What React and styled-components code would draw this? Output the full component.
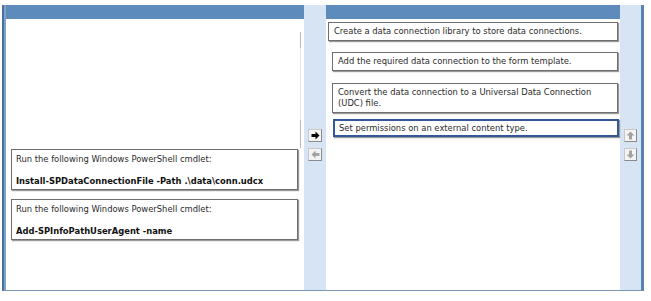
import React from 'react';
import styled, { createGlobalStyle } from 'styled-components';

const GlobalStyle = createGlobalStyle`
  html, body {
    margin: 0;
    padding: 0;
    background: #ffffff;
  }
  body {
    font-family: 'DejaVu Sans', Verdana, sans-serif;
    font-size: 8.4px;
    color: #222;
  }
`;

const Frame = styled.div`
  display: flex;
  margin: 5px 0 0 2px;
  width: 642px;
  height: 286px;
  border-left: 2px solid #46709f;
  border-right: 3px solid #5a82b0;
  border-bottom: 1px solid #7f97b4;
  box-sizing: border-box;
`;

const Panel = styled.div`
  display: flex;
  flex-direction: column;
  width: ${p => p.$width}px;
  border-left: ${p => (p.$edge ? '2px solid #7ea2ca' : 'none')};
  background: #ffffff;
`;

const Header = styled.div`
  height: 14px;
  flex: none;
  background: #5d8cbc;
`;

const Body = styled.div`
  position: relative;
  flex: 1;
  display: flex;
  flex-direction: column;
  padding-top: ${p => p.$top}px;
`;

const ScrollLine = styled.div`
  position: absolute;
  right: 3px;
  top: 13px;
  width: 1px;
  height: 116px;
  background: linear-gradient(#b8b8b8 0 14%, #e6e6e6 14% 76%, #b8b8b8 76%);
`;

const Strip = styled.div`
  display: flex;
  flex-direction: column;
  align-items: center;
  gap: 6px;
  width: ${p => p.$width}px;
  padding-top: 124px;
  background: #d6e4f4;
  box-sizing: border-box;
`;

const ArrowButton = styled.button`
  display: flex;
  align-items: center;
  justify-content: center;
  width: ${p => p.$w}px;
  height: 13px;
  padding: 0;
  background: #f4f4f4;
  border: 1px solid #c8c8c8;
  border-right-color: #8a8a8a;
  border-bottom-color: #8a8a8a;
  box-sizing: border-box;
`;

const Card = styled.div`
  width: ${p => p.$width}px;
  margin: ${p => p.$mt}px 0 0 ${p => p.$ml}px;
  padding: ${p => (p.$selected ? '2px 4px 1px 4px' : '3px 5px 3px 5px')};
  border: ${p => (p.$selected ? '2px solid #34579a' : '1px solid #6e6e6e')};
  box-shadow: 1px 1px 1px #9a9a9a;
  line-height: 11px;
  background: #fff;
  box-sizing: border-box;
  color: #2a2a2a;
`;

const CmdCard = styled(Card)`
  padding: 4px 4px 2px 4px;
`;

const Line = styled.div`
  height: 11px;
  white-space: nowrap;
`;

const Command = styled.div`
  margin-top: 11px;
  height: 11px;
  font-weight: bold;
  color: #111;
  white-space: nowrap;
`;

function Arrow({ dir, active }) {
  const rot = { right: 0, down: 90, left: 180, up: 270 }[dir];
  return (
    <svg width="9" height="9" viewBox="0 0 9 9">
      <path
        d="M0.5 3H4.5V0.5L8.5 4.5L4.5 8.5V6H0.5Z"
        fill={active ? '#000' : '#a3a3a3'}
        transform={`rotate(${rot} 4.5 4.5)`}
      />
    </svg>
  );
}

const commands = [
  { text: 'Install-SPDataConnectionFile -Path .\\data\\conn.udcx', mt: 0 },
  { text: 'Add-SPInfoPathUserAgent -name', mt: 9 },
];

const steps = [
  { lines: ['Create a data connection library to store data connections.'], mt: 3, ml: 2, width: 290 },
  { lines: ['Add the required data connection to the form template.'], mt: 11, ml: 6, width: 286 },
  { lines: ['Convert the data connection to a Universal Data Connection', '(UDC) file.'], mt: 12, ml: 6, width: 286 },
  { lines: ['Set permissions on an external content type.'], mt: 6, ml: 7, width: 286, selected: true },
];

function App() {
  return (
    <>
      <GlobalStyle />
      <Frame>
        <Panel $width={299} $edge>
          <Header />
          <Body $top={130}>
            <ScrollLine />
            {commands.map(c => (
              <CmdCard key={c.text} $width={287} $mt={c.mt} $ml={5}>
                <Line>Run the following Windows PowerShell cmdlet:</Line>
                <Command>{c.text}</Command>
              </CmdCard>
            ))}
          </Body>
        </Panel>
        <Strip $width={22}>
          <ArrowButton type="button" $w={14}><Arrow dir="right" active /></ArrowButton>
          <ArrowButton type="button" $w={14} disabled><Arrow dir="left" /></ArrowButton>
        </Strip>
        <Panel $width={295}>
          <Header />
          <Body $top={0}>
            {steps.map(s => (
              <Card key={s.lines[0]} $width={s.width} $mt={s.mt} $ml={s.ml} $selected={s.selected}>
                {s.lines.map(l => <Line key={l}>{l}</Line>)}
              </Card>
            ))}
          </Body>
        </Panel>
        <Strip $width={21}>
          <ArrowButton type="button" $w={13} disabled><Arrow dir="up" /></ArrowButton>
          <ArrowButton type="button" $w={13} disabled><Arrow dir="down" /></ArrowButton>
        </Strip>
      </Frame>
    </>
  );
}

export default App;
